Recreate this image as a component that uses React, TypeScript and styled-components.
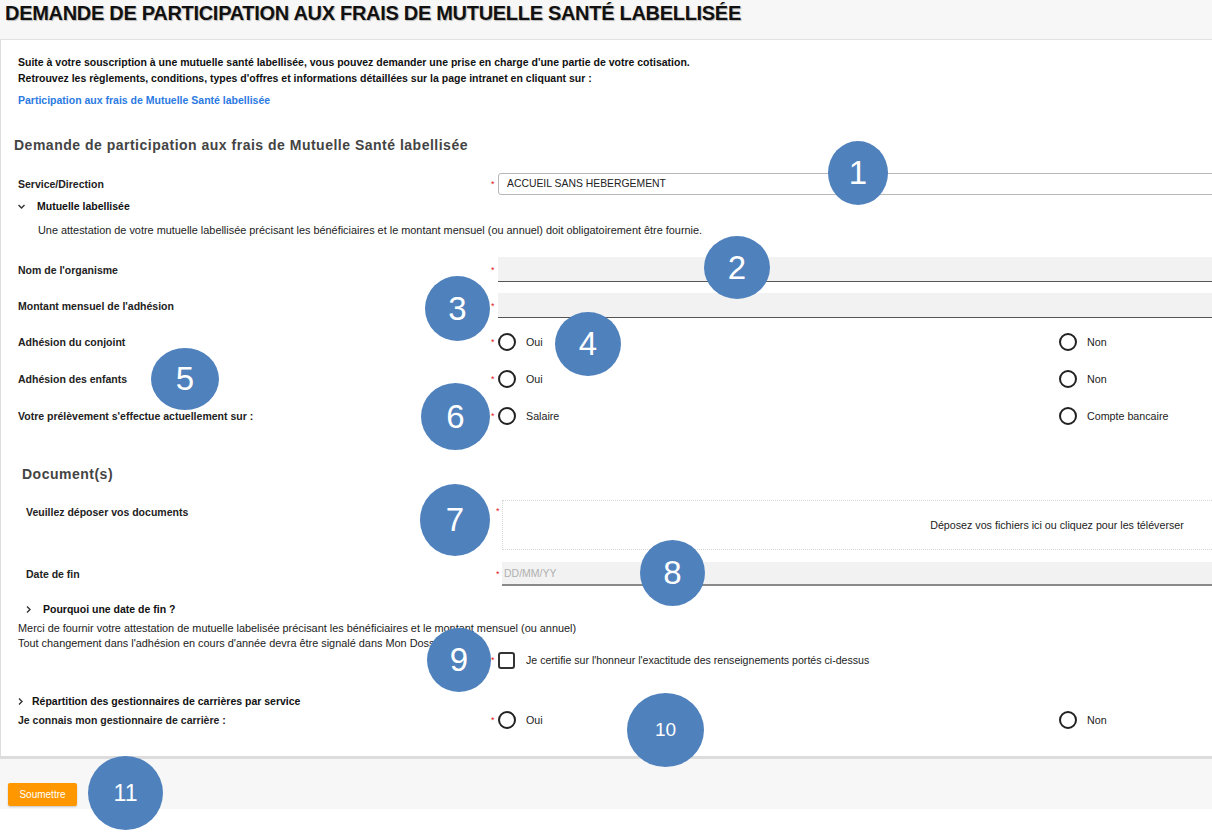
import * as React from "react";
import styled, { createGlobalStyle } from "styled-components";

const GlobalStyle = createGlobalStyle`
  html, body {
    margin: 0;
    padding: 0;
    background: #fff;
  }
  body {
    font-family: "Liberation Sans", Arial, sans-serif;
    color: #222;
    overflow: hidden;
  }
`;

const Page = styled.div`
  position: relative;
  width: 1212px;
  height: 835px;
  overflow: hidden;
  background: #fff;
`;

const TitleBar = styled.div`
  height: 39px;
  background: #f7f7f7;
  padding: 0 5px;
  box-sizing: border-box;
`;

const Title = styled.h1`
  margin: 0;
  font-size: 20px;
  line-height: 27px;
  font-weight: bold;
  color: #111;
  letter-spacing: -0.3px;
  text-shadow: 1px 1px 1px rgba(0, 0, 0, 0.25);
  white-space: nowrap;
`;

const Panel = styled.div`
  background: #fff;
  border-left: 1px solid #ddd;
  border-top: 1px solid #e3e3e3;
  border-bottom: 3px solid #dcdcdc;
  padding: 14px 0 26px 17px;
`;

const Intro = styled.p`
  margin: 0;
  font-size: 10.5px;
  line-height: 16px;
  color: #111;
  font-weight: bold;
  white-space: nowrap;
`;

const InfoLink = styled.a`
  display: block;
  margin-top: 6px;
  font-size: 10.5px;
  font-weight: bold;
  line-height: 16px;
  color: #2a7ae2;
  text-decoration: none;
`;

const SectionTitle = styled.h2<{ $mt: number; $indent?: number }>`
  margin: ${(p) => p.$mt}px 0 0 ${(p) => p.$indent ?? 0}px;
  font-size: 14px;
  line-height: 20px;
  font-weight: bold;
  color: #444;
  letter-spacing: 0.5px;
`;

const FieldRow = styled.div<{ $h: number; $mt?: number; $labelW?: number; $reqW?: number; $top?: boolean }>`
  display: grid;
  grid-template-columns: ${(p) => p.$labelW ?? 473}px ${(p) => p.$reqW ?? 7}px 1110px;
  align-items: ${(p) => (p.$top ? "start" : "center")};
  height: ${(p) => p.$h}px;
  margin-top: ${(p) => p.$mt ?? 0}px;
`;

const Label = styled.div<{ $pt?: number }>`
  font-size: 10.5px;
  font-weight: bold;
  color: #222;
  padding-top: ${(p) => p.$pt ?? 0}px;
  white-space: nowrap;
`;

const Req = styled.span<{ $pt?: number }>`
  color: #e0201b;
  font-size: 9px;
  line-height: 10px;
  padding-top: ${(p) => p.$pt ?? 0}px;
`;

const TextBox = styled.div<{ $filled?: boolean; $h: number; $thick?: boolean }>`
  box-sizing: border-box;
  height: ${(p) => p.$h}px;
  display: flex;
  align-items: center;
  font-size: 10.4px;
  color: #222;
  ${(p) =>
    p.$filled
      ? `background: #f2f2f2; border-bottom: ${p.$thick ? 2 : 1}px solid ${p.$thick ? "#8a8a8a" : "#555"}; padding-left: 2px;`
      : `background: #fff; border: 1px solid #b8b8b8; border-radius: 3px; padding-left: 8px;`}
`;

const Placeholder = styled.span`
  color: #b0b0b0;
  font-size: 10.5px;
`;

const Toggle = styled.div<{ $mt: number; $indent: number; $gap: number }>`
  display: flex;
  align-items: center;
  gap: ${(p) => p.$gap}px;
  margin: ${(p) => p.$mt}px 0 0 ${(p) => p.$indent}px;
  height: 14px;
  font-size: 10.5px;
  font-weight: bold;
  color: #111;
`;

const Note = styled.p<{ $mt: number; $indent?: number }>`
  margin: ${(p) => p.$mt}px 0 0 ${(p) => p.$indent ?? 0}px;
  font-size: 10.9px;
  line-height: 15px;
  color: #222;
  white-space: nowrap;
`;

const RadioGroup = styled.div`
  display: grid;
  grid-template-columns: 561px 549px;
`;

const RadioOption = styled.label`
  display: flex;
  align-items: center;
  gap: 10px;
  font-size: 10.7px;
  color: #222;
`;

const RadioCircle = styled.span`
  box-sizing: border-box;
  width: 18px;
  height: 18px;
  border: 2px solid #222;
  border-radius: 50%;
  background: #fff;
`;

const CheckOption = styled.label`
  display: flex;
  align-items: center;
  gap: 11px;
  font-size: 10.6px;
  color: #222;
`;

const CheckBox = styled.span`
  box-sizing: border-box;
  width: 17px;
  height: 17px;
  border: 2px solid #333;
  border-radius: 3px;
`;

const DocSection = styled.div`
  padding-left: 8px;
`;

const DropZone = styled.div`
  box-sizing: border-box;
  height: 50px;
  border: 1px dotted #d6d6d6;
  display: flex;
  align-items: center;
  justify-content: center;
  font-size: 10.7px;
  color: #222;
`;

const Footer = styled.div`
  background: #f7f7f7;
  padding: 24px 8px 3px;
`;

const SubmitButton = styled.button`
  width: 69px;
  height: 23px;
  border: none;
  border-radius: 2px;
  background: #ff9800;
  color: #fff;
  font-family: "Liberation Sans", Arial, sans-serif;
  font-size: 10px;
  box-shadow: 0 1px 2px rgba(0, 0, 0, 0.2);
  padding: 0;
`;

const Badge = styled.div<{ $fs: number }>`
  position: absolute;
  border-radius: 50%;
  background: #4f81bd;
  color: #fff;
  display: flex;
  align-items: center;
  justify-content: center;
  font-family: "Liberation Sans", Arial, sans-serif;
  font-size: ${(p) => p.$fs}px;
`;

function Chevron({ dir }: { dir: "down" | "right" }) {
  return (
    <svg width="9" height="9" viewBox="0 0 9 9">
      {dir === "down" ? (
        <polyline points="1.5,3 4.5,6 7.5,3" fill="none" stroke="#333" strokeWidth="1.4" />
      ) : (
        <polyline points="3,1.5 6,4.5 3,7.5" fill="none" stroke="#333" strokeWidth="1.4" />
      )}
    </svg>
  );
}

function Radios({ a, b }: { a: string; b: string }) {
  return (
    <RadioGroup>
      <RadioOption>
        <RadioCircle />
        {a}
      </RadioOption>
      <RadioOption>
        <RadioCircle />
        {b}
      </RadioOption>
    </RadioGroup>
  );
}

const badges = [
  { n: "1", x: 828, y: 141, w: 60, h: 64, fs: 33 },
  { n: "2", x: 704, y: 236, w: 66, h: 63, fs: 33 },
  { n: "3", x: 425, y: 276, w: 65, h: 65, fs: 33 },
  { n: "4", x: 555, y: 312, w: 66, h: 64, fs: 33 },
  { n: "5", x: 151, y: 348, w: 68, h: 62, fs: 33 },
  { n: "6", x: 421, y: 383, w: 69, h: 67, fs: 33 },
  { n: "7", x: 420, y: 484, w: 70, h: 72, fs: 33 },
  { n: "8", x: 640, y: 540, w: 65, h: 66, fs: 33 },
  { n: "9", x: 427, y: 628, w: 64, h: 64, fs: 33 },
  { n: "10", x: 627, y: 693, w: 77, h: 74, fs: 19 },
  { n: "11", x: 88, y: 756, w: 75, h: 74, fs: 23 },
];

export default function App() {
  return (
    <>
      <GlobalStyle />
      <Page>
        <TitleBar>
          <Title>DEMANDE DE PARTICIPATION AUX FRAIS DE MUTUELLE SANTÉ LABELLISÉE</Title>
        </TitleBar>
        <Panel>
          <Intro>
            Suite à votre souscription à une mutuelle santé labellisée, vous pouvez demander une prise en charge
            d'une partie de votre cotisation.
            <br />
            Retrouvez les règlements, conditions, types d'offres et informations détaillées sur la page intranet en
            cliquant sur :
          </Intro>
          <InfoLink href="#">Participation aux frais de Mutuelle Santé labellisée</InfoLink>

          <SectionTitle $mt={27} $indent={-4}>
            Demande de participation aux frais de Mutuelle Santé labellisée
          </SectionTitle>

          <FieldRow $h={23} $mt={17}>
            <Label>Service/Direction</Label>
            <Req>*</Req>
            <TextBox $h={22}>ACCUEIL SANS HEBERGEMENT</TextBox>
          </FieldRow>

          <Toggle $mt={4} $indent={-1} $gap={11}>
            <Chevron dir="down" />
            Mutuelle labellisée
          </Toggle>
          <Note $mt={10} $indent={20}>
            Une attestation de votre mutuelle labellisée précisant les bénéficiaires et le montant mensuel (ou
            annuel) doit obligatoirement être fournie.
          </Note>

          <FieldRow $h={37} $mt={13}>
            <Label>Nom de l'organisme</Label>
            <Req>*</Req>
            <TextBox $filled $h={25} />
          </FieldRow>
          <FieldRow $h={35}>
            <Label>Montant mensuel de l'adhésion</Label>
            <Req>*</Req>
            <TextBox $filled $h={25} />
          </FieldRow>
          <FieldRow $h={37}>
            <Label>Adhésion du conjoint</Label>
            <Req>*</Req>
            <Radios a="Oui" b="Non" />
          </FieldRow>
          <FieldRow $h={37}>
            <Label>Adhésion des enfants</Label>
            <Req>*</Req>
            <Radios a="Oui" b="Non" />
          </FieldRow>
          <FieldRow $h={38}>
            <Label>Votre prélèvement s'effectue actuellement sur :</Label>
            <Req>*</Req>
            <Radios a="Salaire" b="Compte bancaire" />
          </FieldRow>

          <DocSection>
            <SectionTitle $mt={29} $indent={-4}>
              Document(s)
            </SectionTitle>
            <FieldRow $h={50} $mt={16} $labelW={470} $reqW={6} $top>
              <Label $pt={6}>Veuillez déposer vos documents</Label>
              <Req $pt={6}>*</Req>
              <DropZone>Déposez vos fichiers ici ou cliquez pour les téléverser</DropZone>
            </FieldRow>
            <FieldRow $h={24} $mt={12} $labelW={470} $reqW={6}>
              <Label>Date de fin</Label>
              <Req>*</Req>
              <TextBox $filled $thick $h={24}>
                <Placeholder>DD/MM/YY</Placeholder>
              </TextBox>
            </FieldRow>
            <Toggle $mt={16} $indent={-2} $gap={10}>
              <Chevron dir="right" />
              Pourquoi une date de fin ?
            </Toggle>
          </DocSection>

          <Note $mt={5}>
            Merci de fournir votre attestation de mutuelle labelisée précisant les bénéficiaires et le montant
            mensuel (ou annuel)
            <br />
            Tout changement dans l'adhésion en cours d'année devra être signalé dans Mon Dossier
          </Note>
          <FieldRow $h={18}>
            <span />
            <Req>*</Req>
            <CheckOption>
              <CheckBox />
              Je certifie sur l'honneur l'exactitude des renseignements portés ci-dessus
            </CheckOption>
          </FieldRow>

          <Toggle $mt={25} $indent={-2} $gap={7}>
            <Chevron dir="right" />
            Répartition des gestionnaires de carrières par service
          </Toggle>
          <FieldRow $h={20} $mt={2}>
            <Label>Je connais mon gestionnaire de carrière :</Label>
            <Req>*</Req>
            <Radios a="Oui" b="Non" />
          </FieldRow>
        </Panel>
        <Footer>
          <SubmitButton>Soumettre</SubmitButton>
        </Footer>

        {badges.map((b) => (
          <Badge
            key={b.n}
            $fs={b.fs}
            style={{ left: b.x, top: b.y, width: b.w, height: b.h }}
          >
            {b.n}
          </Badge>
        ))}
      </Page>
    </>
  );
}
